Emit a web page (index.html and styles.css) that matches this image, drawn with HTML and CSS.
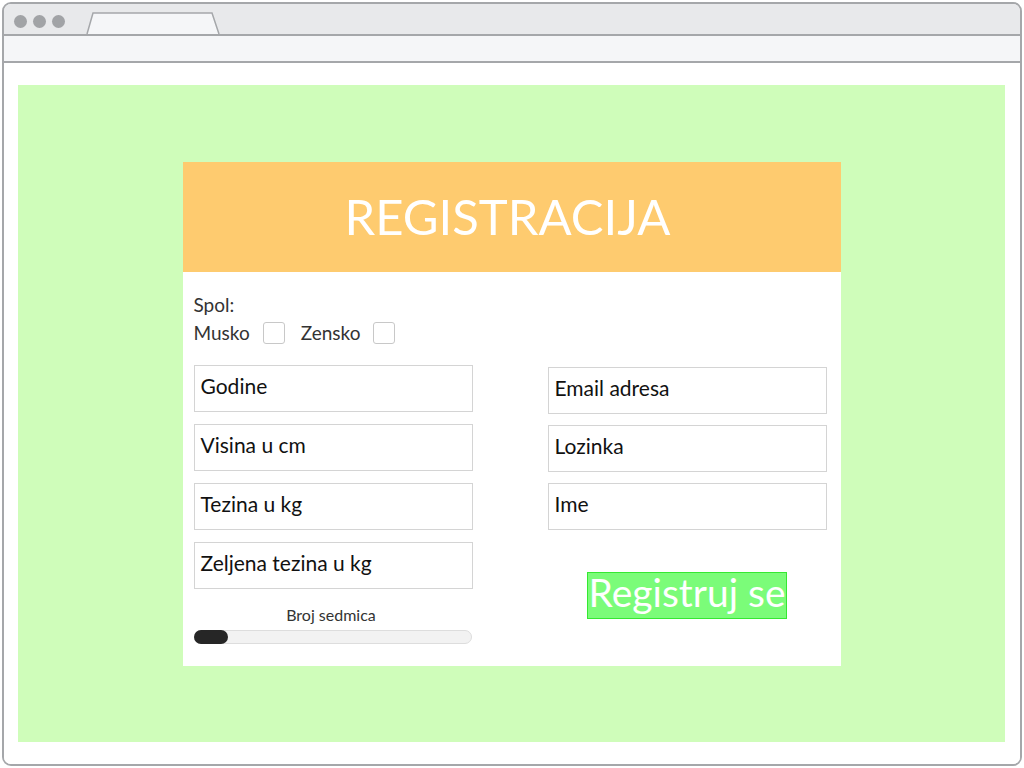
FILE: index.html
```html
<!DOCTYPE html>
<html lang="bs">
<head>
<meta charset="utf-8">
<title>Registracija</title>
<link rel="stylesheet" href="styles.css">
</head>
<body>
<div class="window">
  <div class="tabbar">
    <div class="dots"><span class="dot"></span><span class="dot"></span><span class="dot"></span></div>
    <svg class="tab" width="136" height="24" viewBox="0 0 136 24"><path d="M1 23 L7 2 L126 2 L133 23" fill="#f5f6f8" stroke="#a5a7aa" stroke-width="1.5"/></svg>
  </div>
  <div class="addressbar"></div>
  <div class="content">
    <div class="stage">
      <div class="card">
        <div class="card-header">REGISTRACIJA</div>
        <div class="card-body">
          <div class="col col-left">
            <div class="label">Spol:</div>
            <div class="gender">
              <span class="label">Musko</span><span class="check"></span>
              <span class="label">Zensko</span><span class="check"></span>
            </div>
            <div class="fields">
              <div class="field">Godine</div>
              <div class="field">Visina u cm</div>
              <div class="field">Tezina u kg</div>
              <div class="field">Zeljena tezina u kg</div>
            </div>
            <div class="slider-label">Broj sedmica</div>
            <div class="slider"><div class="thumb"></div></div>
          </div>
          <div class="col col-right">
            <div class="fields fields-right">
              <div class="field">Email adresa</div>
              <div class="field">Lozinka</div>
              <div class="field">Ime</div>
            </div>
            <div class="button">Registruj se</div>
          </div>
        </div>
      </div>
    </div>
  </div>
</div>
</body>
</html>
```

FILE: styles.css
```css
* { box-sizing: border-box; }
html, body { margin: 0; padding: 0; background: #ffffff; }
body { font-family: Lato, "Open Sans", sans-serif; }

.window {
  margin: 2px;
  width: 1020px;
  height: 764px;
  border: 2px solid #a5a7aa;
  border-radius: 9px;
  overflow: hidden;
  display: flex;
  flex-direction: column;
}
.tabbar {
  height: 30px;
  background: #e8e9eb;
  display: flex;
  align-items: flex-end;
  flex-shrink: 0;
}
.dots {
  display: flex;
  gap: 6px;
  padding-left: 10px;
  align-self: center;
  margin-top: 4px;
}
.dot {
  width: 13px;
  height: 13px;
  border-radius: 50%;
  background: #a1a3a6;
}
.tab { margin-left: 21px; display: block; margin-bottom: -1px; }
.addressbar {
  height: 29px;
  flex-shrink: 0;
  background: #f5f6f8;
  border-top: 2px solid #a5a7aa;
  border-bottom: 2px solid #a5a7aa;
}
.content {
  flex: 1;
  background: #ffffff;
  padding: 22px 15px 22px 14px;
  display: flex;
}
.stage {
  flex: 1;
  background: #cffdba;
  display: flex;
  align-items: center;
  justify-content: center;
}
.card {
  width: 658px;
  height: 504px;
  background: #ffffff;
  display: flex;
  flex-direction: column;
}
.card-header {
  height: 110px;
  background: #fecb6f;
  color: #ffffff;
  font-size: 49px;
  font-weight: 400;
  display: flex;
  align-items: center;
  justify-content: center;
  padding-bottom: 2px;
  padding-right: 8px;
}
.card-body {
  display: flex;
  gap: 75px;
  padding: 22px 14px 0 11px;
}
.col { width: 280px; display: flex; flex-direction: column; }
.label {
  font-size: 19px;
  line-height: 22px;
  color: #333333;
}
.gender {
  display: flex;
  align-items: center;
  height: 22px;
  margin-top: 6px;
}
.check {
  width: 22px;
  height: 22px;
  border: 1px solid #c8c8c8;
  border-radius: 3px;
  margin: 1px 16px 0 13px;
}
.fields {
  display: flex;
  flex-direction: column;
  gap: 12px;
  margin-top: 21px;
}
.field {
  height: 47px;
  border: 1px solid #d4d4d4;
  padding-left: 6px;
  display: flex;
  align-items: center;
  font-size: 21px;
  color: #111111;
  padding-bottom: 6px;
}
.fields-right { margin-top: 73px; gap: 11px; }
.slider-label {
  text-align: center;
  font-size: 16px;
  color: #333333;
  margin-top: 16px;
  line-height: 20px;
  padding-right: 4px;
}
.slider {
  width: 278px;
  height: 14px;
  margin-top: 5px;
  background: #f2f2f2;
  border: 1px solid #dddddd;
  border-radius: 7px;
  position: relative;
}
.thumb {
  position: absolute;
  left: -1px;
  top: -1px;
  width: 34px;
  height: 14px;
  border-radius: 7px;
  background: #262626;
}
.button {
  align-self: center;
  margin-top: 42px;
  width: 200px;
  height: 47px;
  background: #7bfc79;
  border: 1px solid #35e832;
  color: #ffffff;
  font-size: 39px;
  font-weight: 400;
  display: flex;
  align-items: center;
  justify-content: center;
  padding-bottom: 6px;
}
```
